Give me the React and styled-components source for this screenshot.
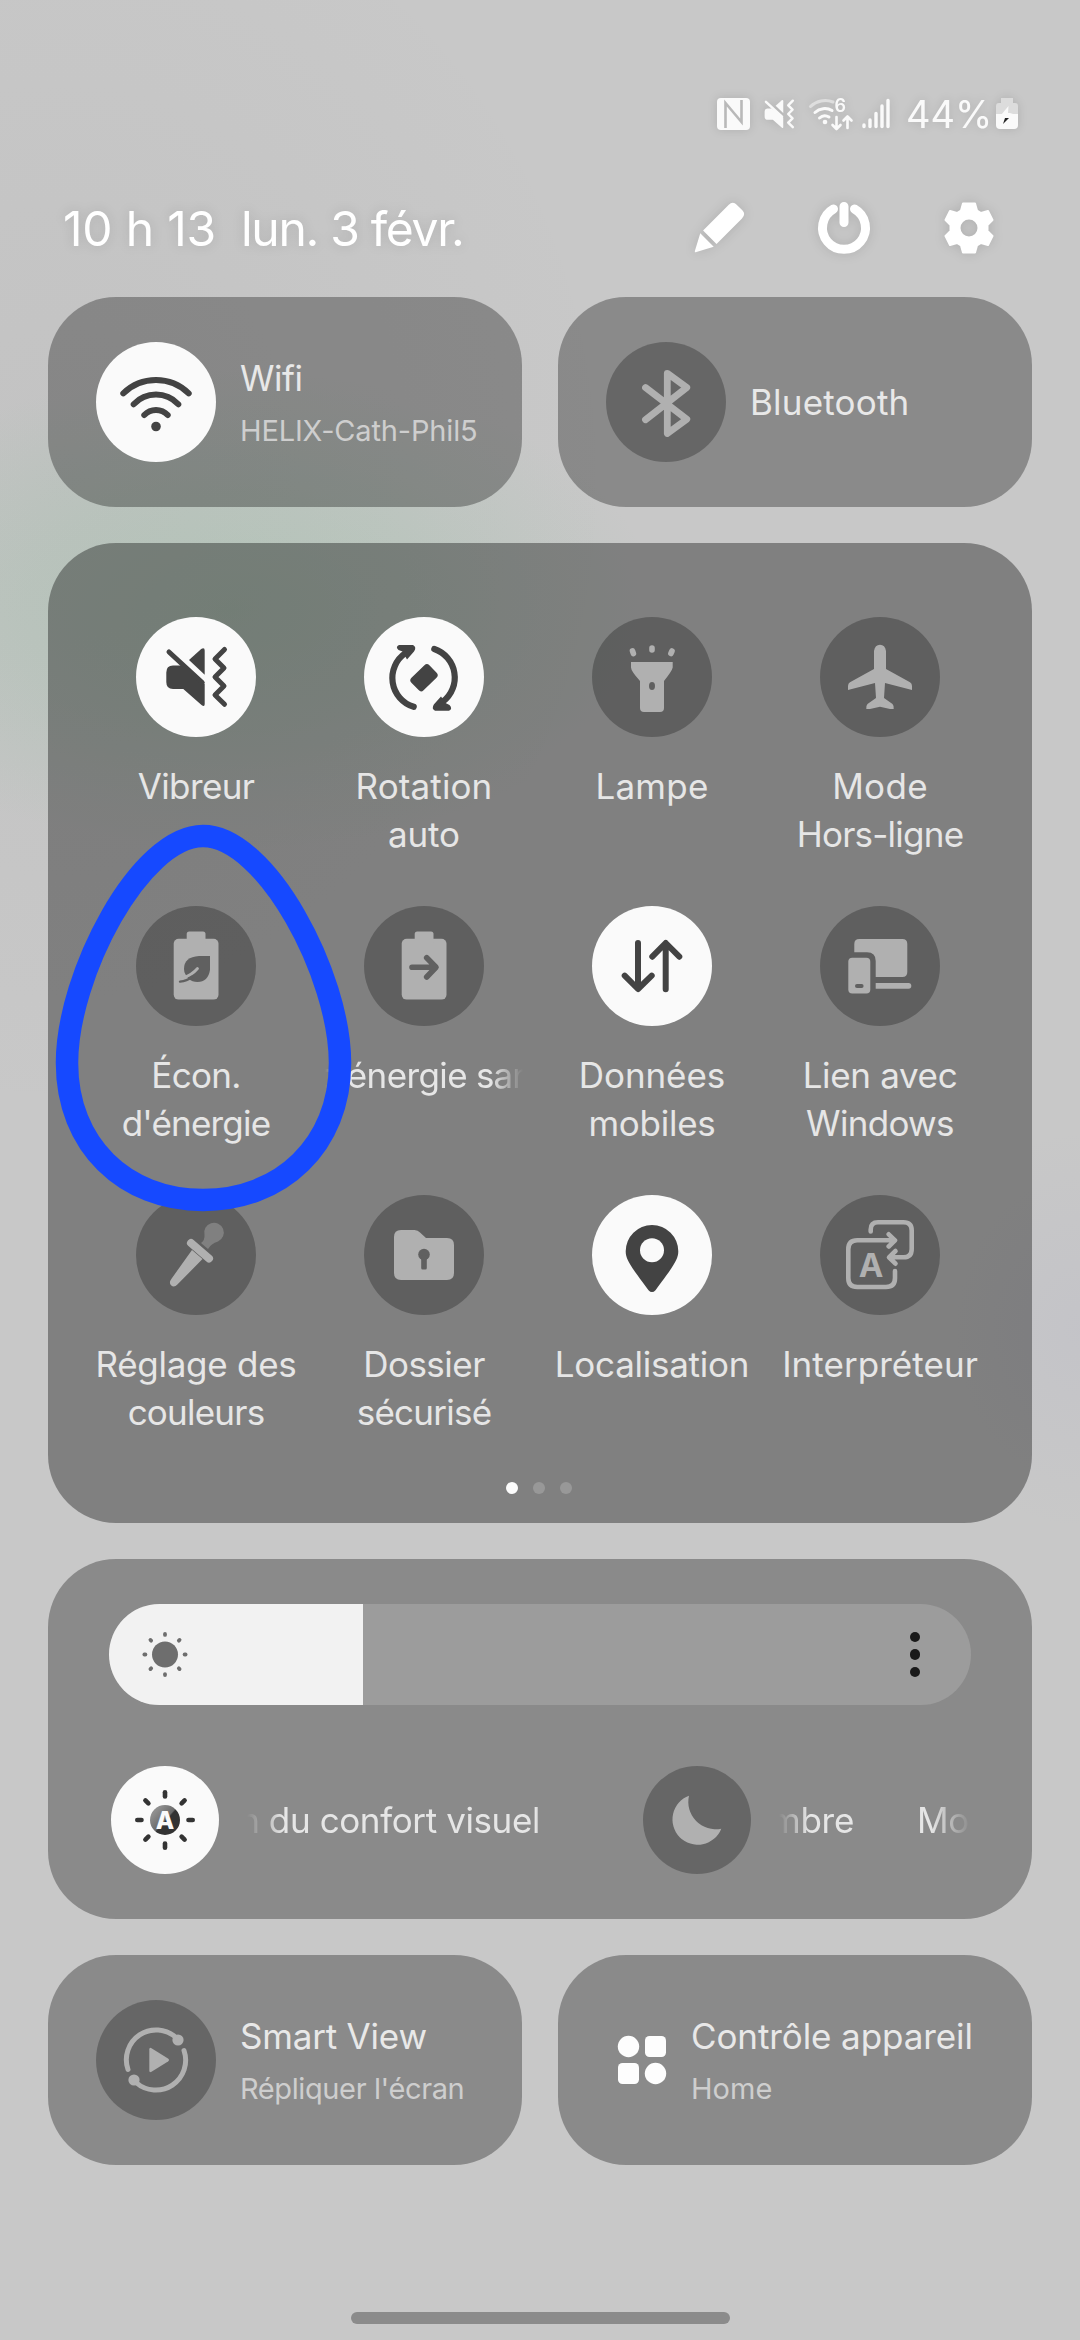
import React from "react";
import styled, { createGlobalStyle } from "styled-components";

const FONT = `Inter, "Liberation Sans", sans-serif`;

const Global = createGlobalStyle`
  body { margin: 0; background: #c8c8c8; font-family: ${FONT}; }
  * { box-sizing: border-box; }
`;

const Screen = styled.div`
  position: relative;
  width: 1080px;
  height: 2340px;
  overflow: hidden;
  display: flex;
  flex-direction: column;
  padding: 0 48px;
  background:
    radial-gradient(ellipse 430px 240px at 230px 610px, rgba(125, 190, 145, 0.25), rgba(125, 190, 145, 0.15) 50%, transparent 100%),
    radial-gradient(ellipse 160px 200px at 1080px 1330px, rgba(150, 150, 200, 0.09), transparent 100%),
    radial-gradient(ellipse 560px 640px at 60px 480px, rgba(110, 110, 110, 0.06), transparent 100%),
    #c8c8c8;
`;

const StatusBar = styled.div`
  display: flex;
  align-items: center;
  justify-content: flex-end;
  height: 60px;
  margin-top: 84px;
  padding-right: 14px;
  color: #fafafa;
  filter: drop-shadow(0 0 5px rgba(0, 0, 0, 0.12));
`;

const StatusIcon = styled.svg`
  flex: none;
  width: ${(p) => p.$w}px;
  height: 34px;
  margin-right: ${(p) => p.$gap}px;
  overflow: visible;
`;

const Percent = styled.span`
  font-size: 38px;
  line-height: 40px;
  width: 83px;
  margin-right: 7px;
  white-space: nowrap;
`;

const Header = styled.header`
  display: flex;
  align-items: center;
  height: 120px;
  margin-top: 24px;
  padding: 0 33px 0 15px;
  margin-bottom: 9px;
  color: #fff;
  filter: drop-shadow(0 0 6px rgba(0, 0, 0, 0.12));
`;

const Clock = styled.span`
  font-size: 48px;
  line-height: 60px;
  padding-top: 2px;
  width: ${(p) => p.$w}px;
  letter-spacing: ${(p) => p.$track}px;
  white-space: nowrap;
`;

const Actions = styled.div`
  display: flex;
  gap: 65px;
  margin-left: auto;
`;

const ActionIcon = styled.svg`
  width: 60px;
  height: 60px;
`;

const CardRow = styled.div`
  display: flex;
  gap: 36px;
  margin-top: ${(p) => p.$top || 0}px;
`;

const Card = styled.section`
  flex: 1;
  height: 210px;
  border-radius: 68px;
  background: rgba(0, 0, 0, 0.31);
  display: flex;
  align-items: center;
  padding-left: 48px;
`;

const CardText = styled.div`
  display: flex;
  flex-direction: column;
  margin-left: 24px;
  padding-top: ${(p) => (p.$double ? 6 : 0)}px;
`;

const Title = styled.span`
  font-size: 35px;
  line-height: 50px;
  color: #e8e8e8;
  letter-spacing: ${(p) => p.$track}px;
  white-space: nowrap;
`;

const Subtitle = styled.span`
  font-size: 29px;
  line-height: 55px;
  color: #cecece;
  letter-spacing: ${(p) => p.$track}px;
  white-space: nowrap;
`;

const Round = styled.span`
  flex: none;
  display: block;
  width: ${(p) => p.$size || 120}px;
  height: ${(p) => p.$size || 120}px;
  border-radius: 50%;
  background: ${(p) => (p.$on ? "#fafafa" : "rgba(0, 0, 0, 0.26)")};
  color: ${(p) => (p.$on ? "#434343" : "#b0b0b0")};
  --hole: ${(p) => (p.$on ? "#fafafa" : "#606060")};
  svg { display: block; width: 100%; height: 100%; }
`;

const Panel = styled.section`
  position: relative;
  margin-top: 36px;
  height: 980px;
  border-radius: 68px;
  background: rgba(0, 0, 0, 0.355);
  padding: 74px 38px 0 34px;
`;

const TileGrid = styled.div`
  display: grid;
  grid-template-columns: repeat(4, 228px);
  grid-auto-rows: 241px;
  row-gap: 48px;
`;

const Tile = styled.div`
  display: flex;
  flex-direction: column;
  align-items: center;
`;

const TileLabel = styled.div`
  margin-top: 25px;
  display: flex;
  flex-direction: column;
  align-items: center;
`;

const Line = styled.span`
  font-size: 35px;
  line-height: 48px;
  color: #e6e6e6;
  letter-spacing: ${(p) => p.$track}px;
  white-space: nowrap;
`;

const Marquee = styled.div`
  display: flex;
  width: ${(p) => p.$w}px;
  overflow: hidden;
  mask-image: linear-gradient(to right, transparent, #000 ${(p) => p.$fade}px, #000 calc(100% - ${(p) => p.$fadeEnd}px), transparent);
`;

const Leaving = styled.div`
  flex: none;
  display: flex;
  justify-content: flex-end;
  width: ${(p) => p.$w}px;
  margin-right: ${(p) => p.$gap || 0}px;
`;

const Pager = styled.div`
  display: flex;
  justify-content: center;
  gap: 15px;
  margin-top: 46px;
  padding-left: 2px;
`;

const Dot = styled.span`
  width: 12px;
  height: 12px;
  border-radius: 50%;
  background: ${(p) => (p.$on ? "#fcfcfc" : "#989898")};
`;

const Highlight = styled.svg`
  position: absolute;
  left: 0;
  top: 270px;
  width: 320px;
  height: 410px;
`;

const Brightness = styled.section`
  margin-top: 36px;
  height: 360px;
  border-radius: 68px;
  background: rgba(0, 0, 0, 0.31);
  padding: 45px 61px 0;
`;

const Slider = styled.div`
  display: flex;
  justify-content: space-between;
  align-items: center;
  height: 101px;
  border-radius: 51px;
  overflow: hidden;
  background: #9c9c9c;
`;

const SliderFill = styled.div`
  width: 254px;
  height: 101px;
  background: #f2f2f2;
  svg { display: block; width: 112px; height: 101px; }
`;

const More = styled.div`
  display: flex;
  flex-direction: column;
  gap: 7px;
  margin-right: 51px;
`;

const MoreDot = styled.span`
  width: 10.4px;
  height: 10.4px;
  border-radius: 50%;
  background: #1a1a1a;
`;

const ModeRow = styled.div`
  display: flex;
  align-items: center;
  margin-top: 61px;
  padding-left: 2px;
`;

const Mode = styled.div`
  display: flex;
  align-items: center;
  gap: 28px;
  width: ${(p) => p.$w}px;
`;

const DeviceIcon = styled.svg`
  width: 50px;
  height: 50px;
  margin-left: 11px;
`;

const HomeBar = styled.div`
  width: 379px;
  height: 12px;
  border-radius: 6px;
  background: #8b8b8b;
  margin: 147px auto 0;
`;

const Glyph = ({ children }) => (
  <svg viewBox="-60 -60 120 120" fill="currentColor" stroke="none">{children}</svg>
);
const S = ({ d, w = 6, c = "currentColor" }) => (
  <path d={d} fill="none" stroke={c} strokeWidth={w} strokeLinecap="round" strokeLinejoin="round" />
);

const WifiIcon = () => (
  <Glyph>
    <S d="M-32.7-8.7A46.8 46.8 0 0 1 32.7-8.7" />
    <S d="M-22.3 2.2A30.6 30.6 0 0 1 22.3 2.2" />
    <S d="M-11.7 13A16 16 0 0 1 11.7 13" />
    <circle cy="24.5" r="4.8" />
  </Glyph>
);
const BluetoothIcon = () => (
  <Glyph><S w={6.8} d="M-20.5-14.5L20.8 17.3L1.3 31.5V-28.7L20.8-14.5L-20.5 17.7" /></Glyph>
);
const VibrateShape = () => (
  <>
    <path d="M-23-11.5H-15L8.7 7V27Q8.7 30.5 5.5 28L-12.7 12H-23Q-29.7 12-29.7 5V-4.5Q-29.7-11.5-23-11.5Z" />
    <S w={5} d="M-27-25L6.2 5.6" />
    <path d="M8.7-26.3V-2.3L-7-17L5.2-28Q8.7-30 8.7-26.3Z" />
    <S w={5} d="M28.5-27.5L19-18L28-9L19 0L28 9L19 18L28.5 27.3" />
  </>
);
const VibrateIcon = () => <Glyph><VibrateShape /></Glyph>;
const RotateIcon = () => (
  <Glyph>
    <S w={6.2} d="M10.3-28A30.2 30.2 0 0 1 19 24.5" />
    <S w={6.2} d="M-10.3 29.8A30.2 30.2 0 0 1-18.5-24" />
    <path d="M-25-32H-11Q-7-30-10-25.5L-17-17.5L-21.5-25.5L-25.5-27Q-29-30-25-32Z" />
    <path d="M25 33.7H11Q7 31.7 10 27.2L17 19.5L21.5 26L25.5 28Q29 32 25 33.7Z" />
    <rect x="-12.5" y="-8.7" width="25" height="17.4" rx="3.5" transform="translate(0 .7) rotate(-44)" />
  </Glyph>
);
const LampIcon = () => (
  <Glyph>
    <path d="M-21-15H20.7V-9.5Q20-6 12 4V31Q12 35 8 35H-8Q-12 35-12 31V4Q-21-6-21-9.5Z" />
    <ellipse cy="9" rx="3" ry="4" fill="var(--hole)" />
    <S w={5.6} d="M0-29V-27M-19.5-26L-18.6-23.5M20-26L18.9-23.5" />
  </Glyph>
);
const PlaneIcon = () => (
  <Glyph>
    <path d="M-6-26Q-5-32.3 0-32.3Q5-32.3 6-26V-8L30 5.3Q32 6.5 32 9V13L5 6L4 21L12.5 27Q14 28.5 13.7 32L10 32L0 29.7L-10 32L-13.7 32Q-14 28.5-12.5 27L-4 21L-5 6L-32 13V9Q-32 6.5-30 5.3L-6-8Z" />
  </Glyph>
);
const BatteryShape = () => (
  <>
    <rect x="-22.3" y="-27.2" width="44.8" height="60.8" rx="5" />
    <rect x="-9.3" y="-34.5" width="18.8" height="12" rx="2.5" />
  </>
);
const EcoIcon = () => (
  <Glyph>
    <BatteryShape />
    <path d="M14-10V4Q12 16 1.5 16Q-4 16-7 13Q-12 8-12 3Q-12-9 3-10Z" fill="var(--hole)" />
    <S w={2.8} d="M-12.5 11.5Q-4 9 1.5 2.5" />
    <S w={2.4} c="var(--hole)" d="M-16 15.6Q-9 15-4 10.8" />
  </Glyph>
);
const PowerShareIcon = () => (
  <Glyph>
    <BatteryShape />
    <S w={5.6} c="var(--hole)" d="M-12 1.3H11.5M2.7-8.3L12 1.3L2.7 11" />
  </Glyph>
);
const DataIcon = () => (
  <Glyph>
    <S d="M-14-23V22.5M-27.3 9.7L-14 23L-.3 9.7" />
    <S d="M13.7 23.3V-22.5M.3-9.3L13.7-23L27.3-9.3" />
  </Glyph>
);
const LinkIcon = () => (
  <Glyph>
    <path d="M-25.7-13.7V-22Q-25.7-27-20.7-27H22.3Q27.3-27 27.3-22V6Q27.3 11 22.3 11H-4.3V-5Q-4.3-13.7-13-13.7Z" />
    <rect x="-31.7" y="-8.3" width="22" height="35.8" rx="4" />
    <path d="M-4.3 17H28.5Q31.3 17 31.3 20Q31.3 22.7 28.5 22.7H-4.3Z" />
    <rect x="-25" y="18" width="8.6" height="4" rx="2" fill="var(--hole)" />
  </Glyph>
);
const DropperIcon = () => (
  <Glyph>
    <path d="M5-12Q9-15 8.5-20A9.8 9.8 0 1 1 22-13.5Q15-11.5 12-6Z" fill="#808080" />
    <S w={8} d="M-5-12L13 3.5" />
    <path d="M-4-5L6.5 4L-18.6 29.6Q-22 33.2-25 30.3Q-27.4 27.5-24.5 23.7Z" />
  </Glyph>
);
const FolderIcon = () => (
  <Glyph>
    <path d="M-30-18Q-30-25-23-25H-9.5Q-6-25-4-22.5L2-17H23Q30-17 30-10V18Q30 25 23 25H-23Q-30 25-30 18Z" />
    <circle cy="-.5" r="5.8" fill="var(--hole)" />
    <rect x="-2.8" y="0" width="5.6" height="14.5" rx="1.5" fill="var(--hole)" />
  </Glyph>
);
const PinIcon = () => (
  <Glyph>
    <path d="M0-30A26.3 26.3 0 0 1 26.3-3.7C26.3 5 21 11.5 3.5 35.2Q0 39-3.5 35.2C-21 11.5-26.3 5-26.3-3.7A26.3 26.3 0 0 1 0-30Z" />
    <circle cy="-4.7" r="12" fill="var(--hole)" />
  </Glyph>
);
const InterpreterIcon = () => (
  <Glyph>
    <S w={4.6} d="M14-14.7H-22.7Q-31.7-14.7-31.7-5.7V23Q-31.7 32 -22.7 32H6Q15 32 15 23V16M8.7-20.7L15-14.7L8.7-8.5" />
    <S w={4.6} d="M-9.3-23.5V-25.5Q-9.3-32.7-2-32.7H23.5Q31.7-32.7 31.7-24.5V-6Q31.7 2.3 23.5 2.3H9.5M15.5-4L9 2.3L15.5 8.7" />
    <text x="-9" y="21.7" textAnchor="middle" fontSize="33" fontWeight="700" fontFamily={FONT}>A</text>
  </Glyph>
);
const RAYS = [0, 45, 90, 135, 180, 225, 270, 315];
const AutoSunIcon = () => (
  <svg viewBox="-54 -54 108 108">
    <defs>
      <linearGradient id="sunHalf" x1="0" y1="0" x2="1" y2="0.9">
        <stop offset="0.2" stopColor="#8f8f8f" />
        <stop offset="0.52" stopColor="#6a6a6a" />
        <stop offset="0.56" stopColor="#333" />
      </linearGradient>
    </defs>
    <circle r="15" fill="url(#sunHalf)" />
    {RAYS.map((a) => (
      <path key={a} d="M0-27.7V-23.5" transform={`rotate(${a})`} stroke="#333" strokeWidth="4.6" strokeLinecap="round" />
    ))}
    <text y="8.7" textAnchor="middle" fontSize="24" fontWeight="800" fill="#fafafa" fontFamily={FONT}>A</text>
  </svg>
);
const MoonIcon = () => (
  <svg viewBox="-54 -54 108 108">
    <path d="M-8-24.3A25.3 25.3 0 1 0 24.3 8.7A27.4 27.4 0 0 1-8-24.3Z" fill="currentColor" />
  </svg>
);
const SunIcon = () => (
  <svg viewBox="-56 -50.5 112 101">
    <circle r="13" fill="#6e6e6e" />
    {RAYS.map((a) => (
      <path key={a} d="M0-20.6V-19.6" transform={`rotate(${a})`} stroke="#6e6e6e" strokeWidth="3.8" strokeLinecap="round" />
    ))}
  </svg>
);
const SmartViewIcon = () => (
  <Glyph>
    <S w={5} d="M-28 9.5A29.8 29.8 0 0 1 20-22.5" />
    <S w={5} d="M28-9.5A29.8 29.8 0 0 1-20 22.5" />
    <circle cx="22" cy="-20" r="5.6" />
    <circle cx="-22" cy="20" r="5.6" />
    <path d="M-6.7-10.5Q-6.7-13-4.5-11.8L12-1.5Q14 0 12 1.5L-4.5 11.8Q-6.7 13-6.7 10.5Z" />
  </Glyph>
);

const tiles = [
  { icon: VibrateIcon, on: true, lines: [["Vibreur", -0.6]] },
  { icon: RotateIcon, on: true, lines: [["Rotation", 0.12], ["auto", -0.15]] },
  { icon: LampIcon, lines: [["Lampe", 0.24]] },
  { icon: PlaneIcon, lines: [["Mode", 0.32], ["Hors-ligne", -0.76]] },
  { icon: EcoIcon, lines: [["Écon.", -0.67], ["d'énergie", -0.8]] },
  { icon: PowerShareIcon, scrolling: true },
  { icon: DataIcon, on: true, lines: [["Données", -0.07], ["mobiles", -0.24]] },
  { icon: LinkIcon, lines: [["Lien avec", -0.34], ["Windows", -0.68]] },
  { icon: DropperIcon, lines: [["Réglage des", -0.26], ["couleurs", -0.78]] },
  { icon: FolderIcon, lines: [["Dossier", -0.51], ["sécurisé", -0.75]] },
  { icon: PinIcon, on: true, lines: [["Localisation", -0.25]] },
  { icon: InterpreterIcon, lines: [["Interpréteur", 0.05]] },
];

export default function App() {
  return (
    <>
      <Global />
      <Screen>
        <StatusBar>
          <StatusIcon $w={33} $gap={14} viewBox="0 0 33 34">
            <rect x="0" y="1" width="33" height="32" rx="4" fill="#fafafa" />
            <path d="M8.5 31V6L24.5 25V3" fill="none" stroke="#b9b9b9" strokeWidth="2.6" />
          </StatusIcon>
          <StatusIcon $w={31} $gap={13} viewBox="-31 -32 64 64" fill="currentColor"><VibrateShape /></StatusIcon>
          <StatusIcon $w={46} $gap={8} viewBox="0 0 46 34">
            <S w={3} c="#dedede" d="M2.5 9.5A21 21 0 0 1 25 5" />
            <S w={3} d="M7 15.5A14.5 14.5 0 0 1 24 13.5" />
            <S w={3} d="M11.5 21A8 8 0 0 1 21 20" />
            <circle cx="17" cy="25" r="2.3" fill="currentColor" />
            <text x="26.5" y="14.5" fontSize="18" fontWeight="600" fill="currentColor" fontFamily={FONT}>6</text>
            <S w={2.6} d="M28.5 20V31.5M24.5 28L28.5 32L32.5 28M39.5 31V20M35.5 23.5L39.5 19.5L43.5 23.5" />
          </StatusIcon>
          <StatusIcon $w={28} $gap={16} viewBox="0 0 28 34">
            <S w={3.4} d="M2 29.5V28M8 29.5V23M14 29.5V16.5M20 29.5V9M26 29.5V3.5" />
          </StatusIcon>
          <Percent>44%</Percent>
          <StatusIcon $w={22} $gap={0} viewBox="0 0 22 34">
            <path d="M5 1H17V6H19Q22 6 22 9V18H0V9Q0 6 3 6H5Z" fill="#dcdcdc" />
            <path d="M0 17H22V28Q22 32 18 32H4Q0 32 0 28Z" fill="#fafafa" />
            <path d="M12.5 9L5 18H11L17 16H12Z" fill="#fafafa" />
            <path d="M9 21H13L7 27Z" fill="#222" />
          </StatusIcon>
        </StatusBar>

        <Header>
          <Clock $w={178} $track={-0.2}>10 h 13</Clock>
          <Clock $w={230} $track={-1.3}>lun. 3 févr.</Clock>
          <Actions>
            <ActionIcon viewBox="-30 -30 60 60" fill="#fff">
              <g transform="rotate(45)">
                <path d="M-9.5-23Q-9.5-29-4-29H4Q9.5-29 9.5-23V13H-9.5Z" />
                <path d="M-9.5 17H9.5L1 33Q0 35-1 33Z" />
              </g>
            </ActionIcon>
            <ActionIcon viewBox="-30 -30 60 60">
              <S w={9} c="#fff" d="M-10.5-19A21.5 21.5 0 1 0 10.5-19M0-21.5V-5.5" />
            </ActionIcon>
            <ActionIcon viewBox="-30 -30 60 60">
              <path fillRule="evenodd" fill="#fff" stroke="#fff" strokeWidth="2" strokeLinejoin="round"
                d="M-6-24.5H6L8-17.5L12-15L19-17L23.5-8L18.5-3V3L23.5 8L19 17L12 15L8 17.5L6 24.5H-6L-8 17.5L-12 15L-19 17L-23.5 8L-18.5 3V-3L-23.5-8L-19-17L-12-15L-8-17.5ZM0-9.5A9.5 9.5 0 1 0 0 9.5A9.5 9.5 0 1 0 0-9.5Z" />
            </ActionIcon>
          </Actions>
        </Header>

        <CardRow>
          <Card>
            <Round $on><WifiIcon /></Round>
            <CardText $double>
              <Title $track={-0.5}>Wifi</Title>
              <Subtitle $track={-0.16}>HELIX-Cath-Phil5</Subtitle>
            </CardText>
          </Card>
          <Card>
            <Round><BluetoothIcon /></Round>
            <CardText><Title $track={0.2}>Bluetooth</Title></CardText>
          </Card>
        </CardRow>

        <Panel>
          <TileGrid>
            {tiles.map(({ icon: Icon, on, lines, scrolling }, i) => (
              <Tile key={i}>
                <Round $on={on}><Icon /></Round>
                <TileLabel>
                  {scrolling ? (
                    <Marquee $w={198} $fade={20} $fadeEnd={32}>
                      <Leaving $w={142} $gap={9}><Line $track={-0.6}>d'énergie</Line></Leaving>
                      <Line $track={-1}>san</Line>
                    </Marquee>
                  ) : (
                    lines.map(([t, k]) => <Line key={t} $track={k}>{t}</Line>)
                  )}
                </TileLabel>
              </Tile>
            ))}
          </TileGrid>
          <Pager><Dot $on /><Dot /><Dot /></Pager>
          <Highlight viewBox="48 813 320 410">
            <path d="M203 836C266 836 340 975 340 1063C340 1145 281 1200 203 1200C125 1200 67 1145 67 1063C67 975 140 836 203 836Z"
              fill="none" stroke="#1649ff" strokeWidth="22.5" />
          </Highlight>
        </Panel>

        <Brightness>
          <Slider>
            <SliderFill><SunIcon /></SliderFill>
            <More><MoreDot /><MoreDot /><MoreDot /></More>
          </Slider>
          <ModeRow>
            <Mode $w={532}>
              <Round $on $size={108}><AutoSunIcon /></Round>
              <Marquee $w={296} $fade={36} $fadeEnd={7}>
                <Leaving $w={293}><Line $track={-0.39}>n du confort visuel</Line></Leaving>
              </Marquee>
            </Mode>
            <Mode $w={328}>
              <Round $size={108}><MoonIcon /></Round>
              <Marquee $w={192} $fade={30} $fadeEnd={40}>
                <Leaving $w={75} $gap={63}><Line $track={-0.3}>mbre</Line></Leaving>
                <Line $track={-0.3}>Mo</Line>
              </Marquee>
            </Mode>
          </ModeRow>
        </Brightness>

        <CardRow $top={36}>
          <Card>
            <Round><SmartViewIcon /></Round>
            <CardText $double>
              <Title $track={-0.2}>Smart View</Title>
              <Subtitle $track={-0.39}>Répliquer l'écran</Subtitle>
            </CardText>
          </Card>
          <Card>
            <DeviceIcon viewBox="0 0 50 50" fill="#fdfdfd">
              <circle cx="11.5" cy="11.5" r="10.7" />
              <rect x="28" y="1" width="21" height="21" rx="4.5" />
              <rect x="1" y="28" width="21" height="21" rx="4.5" />
              <circle cx="38.5" cy="38.5" r="10.7" />
            </DeviceIcon>
            <CardText $double>
              <Title $track={-0.1}>Contrôle appareil</Title>
              <Subtitle $track={0.05}>Home</Subtitle>
            </CardText>
          </Card>
        </CardRow>
        <HomeBar />
      </Screen>
    </>
  );
}
